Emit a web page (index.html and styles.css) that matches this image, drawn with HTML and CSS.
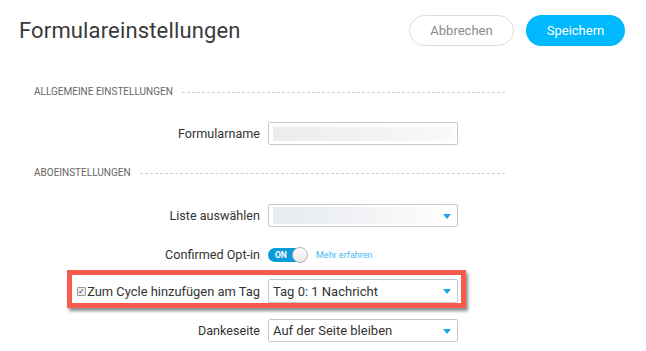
FILE: index.html
```html
<!DOCTYPE html>
<html lang="de">
<head>
  <meta charset="UTF-8" />
  <meta name="viewport" content="width=device-width, initial-scale=1.0" />
  <title>Formulareinstellungen</title>
  <link rel="stylesheet" href="styles.css">
</head>
<body>
  <header class="top">
    <h1 class="title">Formulareinstellungen</h1>
    <div class="actions">
      <button type="button" class="btn btn-cancel">Abbrechen</button>
      <button type="button" class="btn btn-save">Speichern</button>
    </div>
  </header>

  <main class="settings">
    <div class="section-title section-first">Allgemeine Einstellungen</div>
    <div class="row row-name">
      <label class="row-label">Formularname</label>
      <div class="field"><span class="blur"></span></div>
    </div>

    <div class="section-title section-second">Aboeinstellungen</div>
    <div class="row row-list">
      <label class="row-label">Liste auswählen</label>
      <div class="field select"><span class="blur blur-list"></span><span class="arrow"></span></div>
    </div>

    <div class="row row-optin">
      <label class="row-label">Confirmed Opt-in</label>
      <div class="optin">
        <span class="toggle"><span class="toggle-text">ON</span><span class="knob"></span></span>
        <a href="#" class="more">Mehr erfahren</a>
      </div>
    </div>

    <!-- highlighted row -->
    <div class="row row-highlight">
      <label class="row-label check-label"><span class="check">&#10003;</span>Zum Cycle hinzufügen am Tag</label>
      <div class="field select"><span class="value">Tag 0: 1 Nachricht</span><span class="arrow"></span></div>
    </div>

    <div class="row row-thanks">
      <label class="row-label">Dankeseite</label>
      <div class="field select"><span class="value">Auf der Seite bleiben</span><span class="arrow"></span></div>
    </div>
  </main>
</body>
</html>
```

FILE: styles.css
```css
body {
  margin: 0;
  font-family: Roboto, "Liberation Sans", Arial, sans-serif;
  background-color: #fff;
  color: #333;
}
.top {
  display: flex;
  justify-content: space-between;
  align-items: center;
  padding: 15px 21px 0 19px;
}
.title {
  margin: 0;
  font-size: 22px;
  font-weight: 400;
  color: #3a3a3a;
  letter-spacing: 0.15px;
}
.actions {
  display: flex;
  gap: 12px;
}
.btn {
  height: 31px;
  border-radius: 16px;
  font-family: inherit;
  font-size: 13px;
  cursor: pointer;
}
.btn-cancel {
  width: 105px;
  background-color: #fff;
  border: 1px solid #dcdcdc;
  color: #8a8a8a;
}
.btn-save {
  width: 99px;
  background-color: #00b8fc;
  border: none;
  color: #fff;
}
.settings {
  width: 471px;
  padding-left: 34px;
}
.section-title {
  display: flex;
  align-items: center;
  font-size: 10px;
  line-height: 12px;
  text-transform: uppercase;
  color: #666;
}
.section-title::after {
  content: "";
  flex: 1;
  margin-left: 9px;
  border-top: 1px dashed #cfcfcf;
}
.section-first {
  margin-top: 40px;
}
.section-second {
  margin-top: 22px;
}
.row {
  display: flex;
  align-items: center;
  height: 23px;
}
.row-name {
  margin-top: 24px;
}
.row-list {
  margin-top: 25px;
}
.row-optin {
  margin-top: 16px;
}
.row-label {
  width: 226px;
  margin-right: 8px;
  text-align: right;
  font-size: 12.6px;
  color: #333;
}
.field {
  position: relative;
  box-sizing: border-box;
  width: 190px;
  height: 23px;
  border: 1px solid #c8c8c8;
  border-radius: 2px;
  display: flex;
  align-items: center;
  padding-left: 4px;
}
.blur {
  display: block;
  width: 182px;
  height: 14px;
  background: linear-gradient(to right, #ececec, #f3f3f3 60%, #fafafa);
}
.blur-list {
  width: 168px;
  height: 17px;
  background: linear-gradient(to right, #e7eaee, #f2f4f6 60%, #fdfdfd);
}
.value {
  font-size: 13px;
  color: #333;
}
.arrow {
  position: absolute;
  right: 6px;
  top: 9px;
  border-left: 4px solid transparent;
  border-right: 4px solid transparent;
  border-top: 5px solid #1aa8e6;
}
.optin {
  display: flex;
  align-items: center;
}
.toggle {
  position: relative;
  display: flex;
  align-items: center;
  width: 39px;
  height: 14px;
  border-radius: 7px;
  background-color: #0c9ad9;
}
.toggle-text {
  font-size: 8.5px;
  font-weight: 700;
  color: #fff;
  padding-left: 7px;
}
.knob {
  position: absolute;
  right: -1px;
  top: -1px;
  box-sizing: border-box;
  width: 16px;
  height: 16px;
  border-radius: 50%;
  background: linear-gradient(#fff, #e6e6e6);
  border: 1px solid #b8b8b8;
}
.more {
  margin-left: 9px;
  font-size: 9px;
  color: #3fb9f2;
  text-decoration: none;
}
.row-highlight {
  margin-top: 4px;
  margin-left: 33px;
  width: fit-content;
  height: auto;
  border: 5px solid #f85a4c;
  padding: 4px 3px 0 5px;
  box-shadow: 2px 3px 3px rgba(0, 0, 0, 0.45);
}
.check-label {
  width: 183px;
  display: flex;
  justify-content: space-between;
  align-items: center;
  font-size: 12.9px;
}
.check {
  box-sizing: border-box;
  width: 9px;
  height: 9px;
  border: 1px solid #999;
  border-radius: 1px;
  background-color: #eee;
  font-size: 8px;
  line-height: 7px;
  text-align: center;
  color: #333;
}
.row-highlight .field {
  height: 24px;
}
.row-thanks {
  margin-top: 11px;
}
```
